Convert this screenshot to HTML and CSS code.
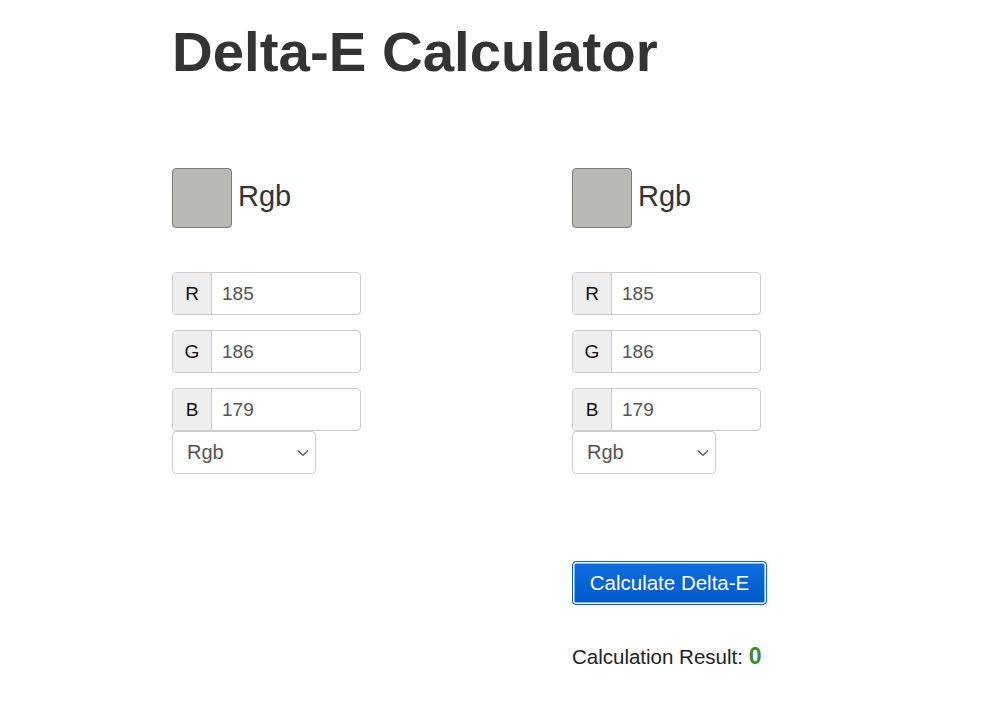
FILE: index.html
```html
<!DOCTYPE html>
<html>
<head>
<meta charset="utf-8">
<link rel="stylesheet" href="styles.css">
</head>
<body>
<div class="page">
  <h1 class="title">Delta-E Calculator</h1>
  <div class="columns">
    <div class="col">
      <div class="head">
        <div class="swatch" style="background: rgb(185,186,179)"></div>
        <span class="mode">Rgb</span>
      </div>
      <div class="fields">
        <div class="group"><span class="addon">R</span><span class="value">185</span></div>
        <div class="group"><span class="addon">G</span><span class="value">186</span></div>
        <div class="group last"><span class="addon">B</span><span class="value">179</span></div>
        <div class="select"><span>Rgb</span><svg class="chev" width="12" height="8" viewBox="0 0 12 8"><path d="M1 1.5 L6 6.5 L11 1.5" fill="none" stroke="#555" stroke-width="1.2"/></svg></div>
      </div>
    </div>
    <div class="col">
      <div class="head">
        <div class="swatch" style="background: rgb(185,186,179)"></div>
        <span class="mode">Rgb</span>
      </div>
      <div class="fields">
        <div class="group"><span class="addon">R</span><span class="value">185</span></div>
        <div class="group"><span class="addon">G</span><span class="value">186</span></div>
        <div class="group last"><span class="addon">B</span><span class="value">179</span></div>
        <div class="select"><span>Rgb</span><svg class="chev" width="12" height="8" viewBox="0 0 12 8"><path d="M1 1.5 L6 6.5 L11 1.5" fill="none" stroke="#555" stroke-width="1.2"/></svg></div>
      </div>
      <div class="actions">
        <button class="btn">Calculate Delta-E</button>
        <div class="result">Calculation Result: <b>0</b></div>
      </div>
    </div>
  </div>
</div>
</body>
</html>
```

FILE: styles.css
```css
html, body {
  margin: 0;
  padding: 0;
  background: #fff;
}
body {
  font-family: "Liberation Sans", Arial, Helvetica, sans-serif;
  color: #333;
}
.page {
  padding-left: 172px;
}
.title {
  margin: 0;
  padding-top: 19px;
  font-size: 56.4px;
  line-height: 66px;
  font-weight: bold;
  color: #333;
}
.columns {
  display: flex;
  margin-top: 83px;
}
.col {
  width: 400px;
}
.head {
  display: flex;
  align-items: center;
  height: 60px;
}
.swatch {
  width: 58px;
  height: 58px;
  border: 1px solid #7a7a7a;
  border-radius: 4px;
}
.mode {
  margin-left: 6px;
  font-size: 29px;
  color: #333;
  padding-bottom: 3px;
}
.fields {
  margin-top: 44px;
}
.group {
  display: flex;
  width: 189px;
  height: 43px;
  box-sizing: border-box;
  border: 1px solid #ccc;
  border-radius: 4px;
  margin-bottom: 15px;
  overflow: hidden;
}
.group.last {
  margin-bottom: 0;
}
.addon {
  width: 38px;
  background: #eee;
  border-right: 1px solid #ccc;
  display: flex;
  align-items: center;
  justify-content: center;
  font-size: 19px;
  color: #111;
}
.value {
  display: flex;
  align-items: center;
  padding-left: 10px;
  font-size: 19px;
  color: #555;
}
.select {
  width: 144px;
  height: 43px;
  box-sizing: border-box;
  border: 1px solid #ccc;
  border-radius: 4px;
  display: flex;
  align-items: center;
  justify-content: space-between;
  padding: 0 6px 0 14px;
  font-size: 20px;
  color: #555;
}
.chev {
  margin-top: 1px;
}
.actions {
  margin-top: 87px;
}
.btn {
  display: block;
  width: 195px;
  height: 44px;
  box-sizing: border-box;
  border: 1px solid #0a5fd0;
  border-radius: 4px;
  background: linear-gradient(#0f6ee0, #0058c8);
  box-shadow: inset 0 0 0 1.5px #fff;
  color: #fff;
  font-family: "Liberation Sans", Arial, sans-serif;
  font-size: 20.5px;
  padding: 0;
}
.result {
  margin-top: 38px;
  font-size: 20.5px;
  color: #222;
}
.result b {
  color: #3b8a3b;
  font-size: 23px;
}
```
